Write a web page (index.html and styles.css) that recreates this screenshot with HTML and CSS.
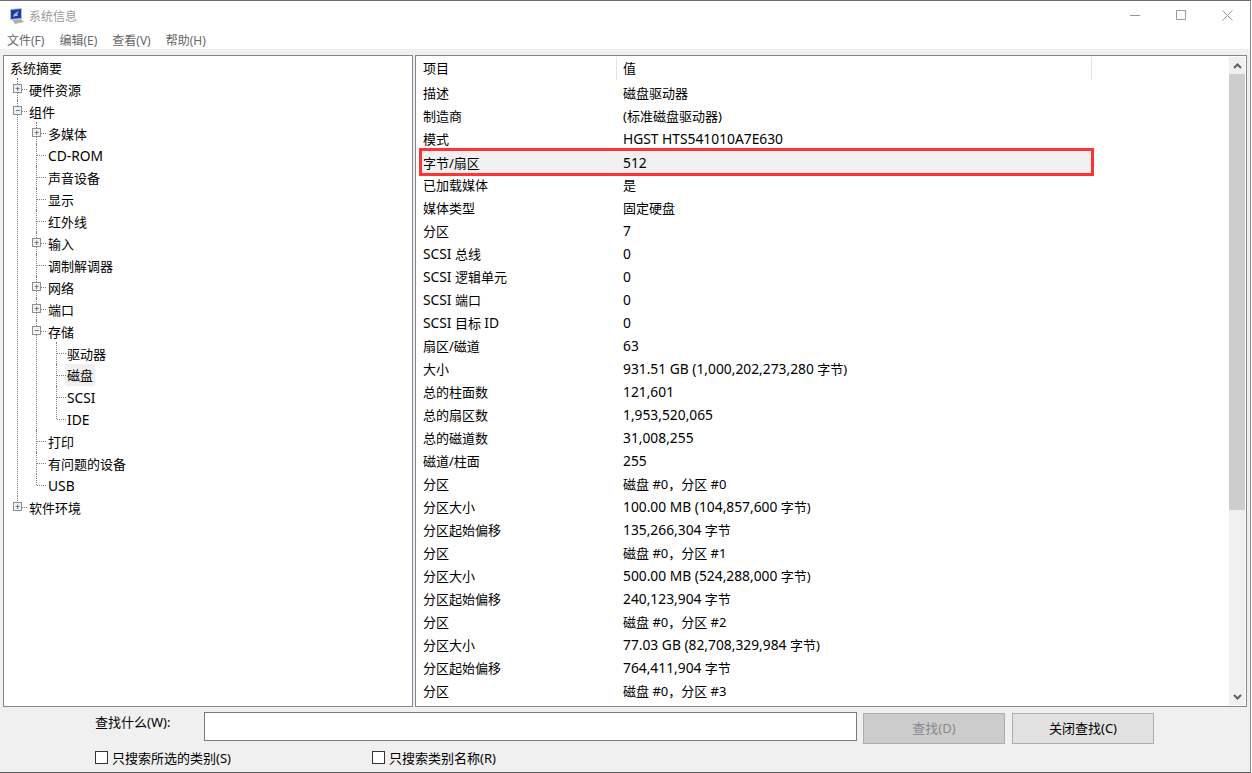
FILE: index.html
```html
<!DOCTYPE html>
<html lang="zh-CN">
<head>
    <meta charset="UTF-8">
    <title>系统信息</title>
    <link rel="stylesheet" href="styles.css">
</head>
<body>
    <div class="window">
        <!-- Barra de titulo -->
        <div class="titlebar">
            <svg class="app-icon" width="15" height="16" viewBox="0 0 15 16">
                <path d="M1 1l12-1v11l-12 1z" fill="#b4bcd4"/>
                <path d="M2 2l10-1v9l-10 1z" fill="#1c3ca4"/>
                <path d="M4 8c1-2 3-4 6-5l-2 3 1 2-3 0-1 1z" fill="#a9bdf0"/>
                <path d="M3 12l9-1 3 3-9 2z" fill="#b0b0b0"/>
            </svg>
            <span class="title">系统信息</span>
            <div class="window-btns">
                <svg width="11" height="11" viewBox="0 0 11 11"><path d="M0 5.5h10" stroke="#999" fill="none"/></svg>
                <svg width="11" height="11" viewBox="0 0 11 11"><path d="M.5.5h9v9h-9z" stroke="#999" fill="none"/></svg>
                <svg width="11" height="11" viewBox="0 0 11 11"><path d="M.5.5l10 10M10.5.5l-10 10" stroke="#999" fill="none"/></svg>
            </div>
        </div>

        <div class="menubar">
            <span>文件(F)</span>
            <span>编辑(E)</span>
            <span>查看(V)</span>
            <span>帮助(H)</span>
        </div>

        <div class="panes">
            <!-- Arbol de categorias -->
            <div class="pane tree-pane">
                <div class="tree-row root-row">系统摘要</div>
                <ul class="tree">
                    <li><div class="tree-row"><i class="toggle">+</i>硬件资源</div></li>
                    <li>
                        <div class="tree-row"><i class="toggle">−</i>组件</div>
                        <ul class="tree">
                            <li><div class="tree-row"><i class="toggle">+</i>多媒体</div></li>
                            <li><div class="tree-row"><span class="lat">CD-ROM</span></div></li>
                            <li><div class="tree-row">声音设备</div></li>
                            <li><div class="tree-row">显示</div></li>
                            <li><div class="tree-row">红外线</div></li>
                            <li><div class="tree-row"><i class="toggle">+</i>输入</div></li>
                            <li><div class="tree-row">调制解调器</div></li>
                            <li><div class="tree-row"><i class="toggle">+</i>网络</div></li>
                            <li><div class="tree-row"><i class="toggle">+</i>端口</div></li>
                            <li>
                                <div class="tree-row"><i class="toggle">−</i>存储</div>
                                <ul class="tree">
                                    <li><div class="tree-row">驱动器</div></li>
                                    <li><div class="tree-row"><span class="selected">磁盘</span></div></li>
                                    <li><div class="tree-row"><span class="lat">SCSI</span></div></li>
                                    <li><div class="tree-row"><span class="lat">IDE</span></div></li>
                                </ul>
                            </li>
                            <li><div class="tree-row">打印</div></li>
                            <li><div class="tree-row">有问题的设备</div></li>
                            <li><div class="tree-row"><span class="lat">USB</span></div></li>
                        </ul>
                    </li>
                    <li><div class="tree-row"><i class="toggle">+</i>软件环境</div></li>
                </ul>
            </div>

            <!-- Lista de valores -->
            <div class="pane list-pane">
                <div class="list">
                    <div class="list-head"><span>项目</span><span>值</span></div>
                    <div class="list-row"><span>描述</span><span>磁盘驱动器</span></div>
                    <div class="list-row"><span>制造商</span><span>(标准磁盘驱动器)</span></div>
                    <div class="list-row"><span>模式</span><span class="lat">HGST HTS541010A7E630</span></div>
                    <div class="list-row marked"><span>字节/扇区</span><span class="lat">512</span></div>
                    <div class="list-row"><span>已加载媒体</span><span>是</span></div>
                    <div class="list-row"><span>媒体类型</span><span>固定硬盘</span></div>
                    <div class="list-row"><span>分区</span><span class="lat">7</span></div>
                    <div class="list-row"><span><span class="lat">SCSI</span> 总线</span><span class="lat">0</span></div>
                    <div class="list-row"><span><span class="lat">SCSI</span> 逻辑单元</span><span class="lat">0</span></div>
                    <div class="list-row"><span><span class="lat">SCSI</span> 端口</span><span class="lat">0</span></div>
                    <div class="list-row"><span><span class="lat">SCSI</span> 目标 <span class="lat">ID</span></span><span class="lat">0</span></div>
                    <div class="list-row"><span>扇区/磁道</span><span class="lat">63</span></div>
                    <div class="list-row"><span>大小</span><span><span class="lat">931.51 GB (1,000,202,273,280</span> 字节)</span></div>
                    <div class="list-row"><span>总的柱面数</span><span class="lat">121,601</span></div>
                    <div class="list-row"><span>总的扇区数</span><span class="lat">1,953,520,065</span></div>
                    <div class="list-row"><span>总的磁道数</span><span class="lat">31,008,255</span></div>
                    <div class="list-row"><span>磁道/柱面</span><span class="lat">255</span></div>
                    <div class="list-row"><span>分区</span><span>磁盘 #0，分区 #0</span></div>
                    <div class="list-row"><span>分区大小</span><span><span class="lat">100.00 MB (104,857,600</span> 字节)</span></div>
                    <div class="list-row"><span>分区起始偏移</span><span><span class="lat">135,266,304</span> 字节</span></div>
                    <div class="list-row"><span>分区</span><span>磁盘 #0，分区 #1</span></div>
                    <div class="list-row"><span>分区大小</span><span><span class="lat">500.00 MB (524,288,000</span> 字节)</span></div>
                    <div class="list-row"><span>分区起始偏移</span><span><span class="lat">240,123,904</span> 字节</span></div>
                    <div class="list-row"><span>分区</span><span>磁盘 #0，分区 #2</span></div>
                    <div class="list-row"><span>分区大小</span><span><span class="lat">77.03 GB (82,708,329,984</span> 字节)</span></div>
                    <div class="list-row"><span>分区起始偏移</span><span><span class="lat">764,411,904</span> 字节</span></div>
                    <div class="list-row"><span>分区</span><span>磁盘 #0，分区 #3</span></div>
                </div>
                <div class="scrollbar">
                    <div class="scroll-btn"><svg width="9" height="6" viewBox="0 0 9 6"><path d="M1 5l3.5-3.5L8 5" stroke="#606060" stroke-width="2" fill="none"/></svg></div>
                    <div class="scroll-track"><div class="scroll-thumb"></div></div>
                    <div class="scroll-btn"><svg width="9" height="6" viewBox="0 0 9 6"><path d="M1 1l3.5 3.5L8 1" stroke="#606060" stroke-width="2" fill="none"/></svg></div>
                </div>
            </div>
        </div>

        <!-- Barra de busqueda -->
        <div class="findbar">
            <div class="find-line">
                <label class="find-label">查找什么(W):</label>
                <input class="find-input" type="text">
                <button class="btn btn-disabled">查找(D)</button>
                <button class="btn btn-close">关闭查找(C)</button>
            </div>
            <div class="check-line">
                <label class="check check-first"><i class="box"></i>只搜索所选的类别(S)</label>
                <label class="check"><i class="box"></i>只搜索类别名称(R)</label>
            </div>
        </div>
    </div>
</body>
</html>
```

FILE: styles.css
```css
* {
    margin: 0;
    padding: 0;
    box-sizing: border-box;
    font-family: "Noto Sans", "Noto Sans CJK SC", sans-serif;
}

body {
    background-color: #fff;
    width: 1252px;
    height: 773px;
    overflow: hidden;
    font-size: 13px;
    color: #000;
}

.lat {
    font-size: 13.8px;
}

.window {
    width: 1251px;
    height: 773px;
    background-color: #f0f0f0;
    border-top: 1px solid #6e6e6e;
    border-right: 1px solid #8a8a8a;
    border-bottom: 1px solid #5a5a5a;
    display: flex;
    flex-direction: column;
}

.titlebar {
    height: 29px;
    background-color: #fff;
    display: flex;
    align-items: center;
    padding-left: 9px;
}

.app-icon {
    flex-shrink: 0;
}

.title {
    margin-left: 5px;
    font-size: 12px;
    color: #999;
}

.window-btns {
    margin-left: auto;
    margin-right: 17px;
    display: flex;
    gap: 35px;
}

.menubar {
    height: 19px;
    background-color: #fff;
    display: flex;
    gap: 15px;
    padding-left: 7px;
    font-size: 12px;
    color: #666;
    align-items: center;
}

.panes {
    display: flex;
    gap: 2px;
    height: 652px;
    margin-top: 6px;
    padding-left: 3px;
}

.pane {
    background-color: #fff;
    border: 1px solid #828790;
    overflow: hidden;
}

.tree-pane {
    width: 410px;
    padding-left: 6px;
}

.list-pane {
    width: 832px;
    display: flex;
}

.tree,
.tree li {
    list-style: none;
}

.tree li {
    position: relative;
}

.tree-row {
    height: 22px;
    display: flex;
    align-items: center;
    white-space: nowrap;
    position: relative;
    padding-left: 19px;
}

.root-row {
    padding-left: 0;
}

.tree .tree {
    margin-left: 19px;
}

.tree .tree .tree {
    margin-left: 20px;
}

.tree .tree .tree .tree-row {
    padding-left: 18px;
}

/* lineas punteadas del arbol */
.tree li::before {
    content: "";
    position: absolute;
    left: 7px;
    top: 0;
    bottom: 0;
    border-left: 1px dotted #808080;
}

.tree li:last-child::before {
    bottom: auto;
    height: 11px;
}

.tree-row::before {
    content: "";
    position: absolute;
    left: 8px;
    top: 11px;
    width: 9px;
    border-top: 1px dotted #808080;
}

.root-row::before {
    display: none;
}

.toggle {
    position: absolute;
    left: 3px;
    top: 6px;
    width: 9px;
    height: 9px;
    border: 1px solid #8e8f8f;
    background-color: #f2f2f2;
    color: #1c3a7a;
    font-style: normal;
    font-size: 9px;
    line-height: 7px;
    text-align: center;
    z-index: 1;
}

.selected {
    background-color: #f0f0f0;
    line-height: 18px;
    padding: 2px;
    margin-left: -2px;
}

.list {
    width: 813px;
    overflow: hidden;
    position: relative;
}

.list-head,
.list-row {
    display: grid;
    grid-template-columns: 200px 469px;
    padding-left: 7px;
    align-items: center;
    white-space: nowrap;
}

.list-head {
    height: 25px;
}

.list-head span {
    height: 23px;
    line-height: 23px;
    border-right: 1px solid #e5e5e5;
}

.list-head span:first-child {
    margin-right: 6px;
}

.list-row {
    height: 23px;
}

.marked {
    width: 669px;
    height: 22px;
    margin-top: 1px;
    margin-left: 6px;
    padding-left: 1px;
    background-color: #f0f0f0;
    outline: 3px solid #f33;
    position: relative;
}

.scrollbar {
    width: 16px;
    margin-top: 1px;
    margin-bottom: 1px;
    background-color: #f0f0f0;
    display: flex;
    flex-direction: column;
}

.scroll-btn {
    height: 17px;
    display: flex;
    align-items: center;
    justify-content: center;
}

.scroll-track {
    flex: 1;
}

.scroll-thumb {
    height: 436px;
    background-color: #cdcdcd;
}

.findbar {
    flex: 1;
    padding-left: 95px;
}

.find-line {
    display: flex;
    align-items: flex-start;
    margin-top: 5px;
    height: 32px;
}

.find-label {
    width: 109px;
    line-height: 20px;
}

.find-input {
    width: 653px;
    height: 29px;
    border: 1px solid #7a7a7a;
    background-color: #fff;
    outline: none;
}

.btn {
    width: 142px;
    height: 31px;
    margin-top: 1px;
    padding-bottom: 2px;
    border: 1px solid #adadad;
    background-color: #e1e1e1;
    font-size: 13px;
    margin-left: 6px;
}

.btn-disabled {
    background-color: #ccc;
    color: #888;
}

.btn-close {
    margin-left: 7px;
}

.check-line {
    display: flex;
    margin-top: 4px;
}

.check {
    display: flex;
    align-items: center;
    height: 18px;
}

.check-first {
    width: 277px;
}

.box {
    width: 13px;
    height: 13px;
    border: 1px solid #333;
    background-color: #fff;
    margin-right: 4px;
}
```
